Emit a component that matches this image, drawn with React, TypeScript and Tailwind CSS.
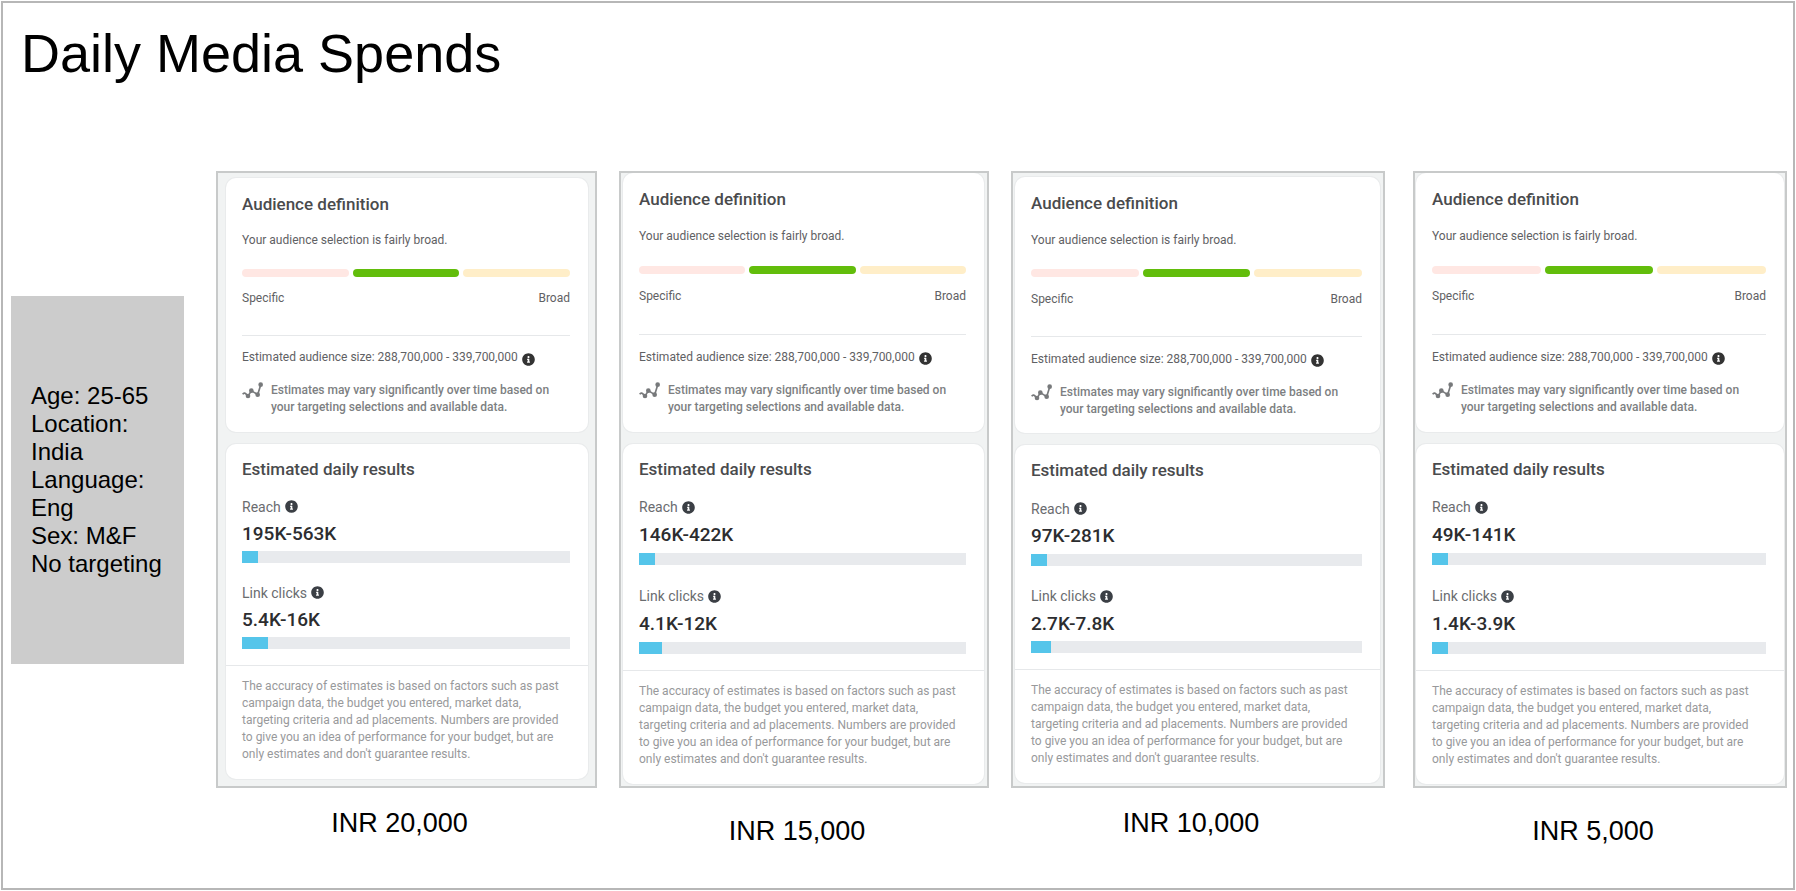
import React from 'react';
import { FaInfoCircle } from 'react-icons/fa';

interface Metric {
  label: string;
  range: string;
  percent: number;
}

interface Plan {
  budget: string;
  metrics: Metric[];
  figureClass: string;
  panelClass: string;
  captionClass: string;
}

const TARGETING = ['Age: 25-65', 'Location: India', 'Language: Eng', 'Sex: M&F', 'No targeting'];

const PLANS: Plan[] = [
  {
    budget: 'INR 20,000',
    metrics: [
      { label: 'Reach', range: '195K-563K', percent: 4.8 },
      { label: 'Link clicks', range: '5.4K-16K', percent: 8 },
    ],
    figureClass: 'flex-[381_1_0%]',
    panelClass: 'pt-[5px] pb-[7px] pl-2 pr-[7px]',
    captionClass: 'pt-[19px]',
  },
  {
    budget: 'INR 15,000',
    metrics: [
      { label: 'Reach', range: '146K-422K', percent: 4.8 },
      { label: 'Link clicks', range: '4.1K-12K', percent: 7 },
    ],
    figureClass: 'flex-[370_1_0%]',
    panelClass: 'pb-0.5 pl-0.5 pr-[3px]',
    captionClass: 'pt-[27px]',
  },
  {
    budget: 'INR 10,000',
    metrics: [
      { label: 'Reach', range: '97K-281K', percent: 4.8 },
      { label: 'Link clicks', range: '2.7K-7.8K', percent: 6.1 },
    ],
    figureClass: 'flex-[374_1_0%]',
    panelClass: 'pt-1 pb-[3px] pl-0.5 pr-[3px]',
    captionClass: 'pt-[19px]',
  },
  {
    budget: 'INR 5,000',
    metrics: [
      { label: 'Reach', range: '49K-141K', percent: 4.8 },
      { label: 'Link clicks', range: '1.4K-3.9K', percent: 4.8 },
    ],
    figureClass: 'flex-[374_1_0%] ml-1.5',
    panelClass: 'pb-0.5 px-px',
    captionClass: 'pt-[27px]',
  },
];

const InfoButton: React.FC<{ label: string; className?: string }> = ({ label, className = '' }) => (
  <button type="button" aria-label={label} className={`shrink-0 ${className}`}>
    <FaInfoCircle className="w-[13px] h-[13px]" />
  </button>
);

const TrendIcon: React.FC = () => (
  <svg className="w-[21px] h-[17px] shrink-0 text-[#77797b]" viewBox="22 130 63 51" fill="none" aria-hidden="true">
    <path d="M24 167 Q29 161 33 165 L40 173 L50 156 L69 168 L79 136" stroke="currentColor" strokeWidth="5" strokeLinejoin="round" />
    <g fill="currentColor">
      <circle cx="40" cy="172" r="7" />
      <circle cx="50" cy="156" r="7" />
      <circle cx="69" cy="168" r="7" />
      <circle cx="78" cy="138" r="7" />
    </g>
  </svg>
);

const CARD = 'flex flex-col grow rounded-[10px] bg-white ring-1 ring-[#e9ebec]';

const AudienceCard: React.FC = () => (
  <section className={`${CARD} justify-between pl-4 pr-[18px] pt-4 pb-[15px] text-xs leading-4 text-[#5f6164]`}>
    <h2 className="text-[17px] leading-5 font-medium text-[#4a4b4d]">Audience definition</h2>
    <p className="mt-[18px]">Your audience selection is fairly broad.</p>
    <div className="mt-[21px] flex gap-1">
      <div className="h-2 flex-1 rounded-full bg-[#ffe7e3]" />
      <div className="h-2 flex-1 rounded-full bg-[#62bd0b]" />
      <div className="h-2 flex-1 rounded-full bg-[#ffeec8]" />
    </div>
    <div className="mt-[13px] flex justify-between">
      <span>Specific</span>
      <span>Broad</span>
    </div>
    <hr className="mt-[29px] border-[#e6e8ea]" />
    <div className="mt-[13px] flex h-4 items-center gap-1">
      <p className="whitespace-nowrap">Estimated audience size: 288,700,000 - 339,700,000</p>
      <InfoButton label="About audience size" className="pt-1 text-[#333333]" />
    </div>
    <div className="mt-[17px] flex gap-2 font-medium text-[#7d7f82]">
      <TrendIcon />
      <p className="max-w-[290px] leading-[17px]">
        Estimates may vary significantly over time based on your targeting selections and available data.
      </p>
    </div>
  </section>
);

const ResultsCard: React.FC<{ metrics: Metric[] }> = ({ metrics }) => (
  <section className={CARD}>
    <div className="flex flex-col grow justify-between pl-4 pr-[18px] pt-[15px] pb-4">
      <h2 className="text-[17px] leading-5 font-medium text-[#4a4b4d]">Estimated daily results</h2>
      {metrics.map((metric, i) => (
        <React.Fragment key={metric.label}>
          <div className={`flex items-center gap-1 text-sm leading-5 text-[#6a6c6f] ${i === 0 ? 'mt-[18px]' : 'mt-5'}`}>
            <span>{metric.label}</span>
            <InfoButton label={`About ${metric.label}`} className="text-[#3b3f45]" />
          </div>
          <p className="mt-[7px] text-[19px] leading-5 font-medium text-[#2c2d2f]">{metric.range}</p>
          <div className="mt-[7px] h-3 bg-[#e8eaed]">
            <div className="h-full bg-[#55c5ea]" style={{ width: `${metric.percent}%` }} />
          </div>
        </React.Fragment>
      ))}
    </div>
    <div className="border-t border-[#e6e8ea] pl-4 pr-[18px] pt-3 pb-4">
      <p className="max-w-[318px] text-xs leading-[17px] text-[#98999b]">
        The accuracy of estimates is based on factors such as past campaign data, the budget you entered, market data,
        targeting criteria and ad placements. Numbers are provided to give you an idea of performance for your budget,
        but are only estimates and don't guarantee results.
      </p>
    </div>
  </section>
);

const PlanFigure: React.FC<{ plan: Plan }> = ({ plan }) => (
  <figure className={`min-w-0 ${plan.figureClass}`}>
    <div
      className={`flex flex-col gap-3 min-h-[617px] overflow-hidden border-2 border-[#c8caca] bg-[#f1f3f3] font-[Roboto,sans-serif] ${plan.panelClass}`}
    >
      <AudienceCard />
      <ResultsCard metrics={plan.metrics} />
    </div>
    <figcaption className={`pr-3.5 text-center text-[27px] leading-8 text-black ${plan.captionClass}`}>
      {plan.budget}
    </figcaption>
  </figure>
);

export default function App() {
  return (
    <div className="flex min-h-screen bg-white p-px font-['Liberation_Sans',Arial,sans-serif]">
      <main className="grow border-2 border-[#b7b7b7]">
        <h1 className="px-[18px] pt-[18px] text-[54px] leading-[64px] text-black">Daily Media Spends</h1>
        <div className="mt-[86px] flex items-start gap-[22px] pl-2 pr-1.5">
          <aside className="mt-[125px] mr-2.5 w-[173px] shrink-0 bg-[#cccccc] px-5 py-[86px] text-2xl leading-7 text-black">
            {TARGETING.map((line) => (
              <p key={line}>{line}</p>
            ))}
          </aside>
          {PLANS.map((plan) => (
            <PlanFigure key={plan.budget} plan={plan} />
          ))}
        </div>
      </main>
    </div>
  );
}
